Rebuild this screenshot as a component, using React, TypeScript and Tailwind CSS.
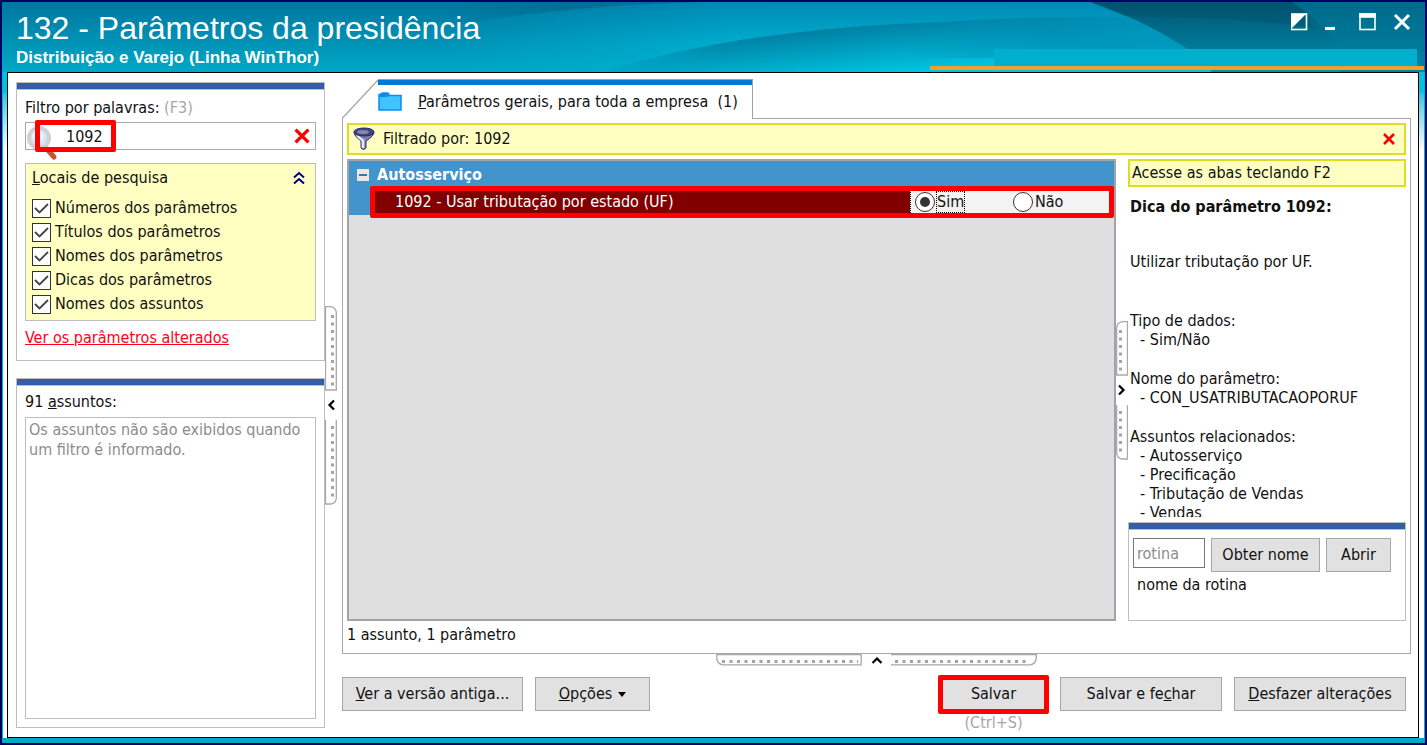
import { useState } from "react";
import type { ReactNode } from "react";

const searchPlaces = [
  "Números dos parâmetros",
  "Títulos dos parâmetros",
  "Nomes dos parâmetros",
  "Dicas dos parâmetros",
  "Nomes dos assuntos",
];

const hintGroups = [
  { title: "Tipo de dados:", items: ["Sim/Não"] },
  { title: "Nome do parâmetro:", items: ["CON_USATRIBUTACAOPORUF"] },
  {
    title: "Assuntos relacionados:",
    items: ["Autosserviço", "Precificação", "Tributação de Vendas", "Vendas"],
  },
];

function Waves() {
  return (
    <svg
      className="absolute inset-0 h-full w-full"
      viewBox="0 0 1423 70"
      preserveAspectRatio="none"
      aria-hidden="true"
    >
      <defs>
        <linearGradient id="base" x1="0" y1="0" x2="0" y2="1">
          <stop offset="0" stopColor="#00769f" />
          <stop offset="1" stopColor="#00a8c6" />
        </linearGradient>
        <linearGradient id="bright" x1="0" y1="0" x2="0" y2="1">
          <stop offset="0" stopColor="#008ab4" />
          <stop offset="0.6" stopColor="#00acce" />
          <stop offset="1" stopColor="#00b0ce" />
        </linearGradient>
        <linearGradient id="mask-fill" x1="0" y1="0" x2="1" y2="0">
          <stop offset="0" stopColor="#fff" stopOpacity="0" />
          <stop offset="0.3" stopColor="#fff" />
        </linearGradient>
        <mask id="reveal">
          <rect x="440" width="983" height="70" fill="url(#mask-fill)" />
        </mask>
        <linearGradient id="top-shade" x1="0" y1="0" x2="1" y2="0">
          <stop offset="0" stopColor="#006488" stopOpacity="0" />
          <stop offset="0.5" stopColor="#006488" stopOpacity="0.5" />
          <stop offset="1" stopColor="#006488" stopOpacity="0.3" />
        </linearGradient>
        <linearGradient id="low" gradientUnits="userSpaceOnUse" x1="900" y1="16" x2="905" y2="70">
          <stop offset="0" stopColor="#007a9f" />
          <stop offset="1" stopColor="#00c4df" />
        </linearGradient>
        <linearGradient id="shade" x1="0" y1="0" x2="1" y2="0">
          <stop offset="0" stopColor="#00a6c6" />
          <stop offset="1" stopColor="#00a6c6" stopOpacity="0" />
        </linearGradient>
        <linearGradient id="low-end" x1="0" y1="0" x2="1" y2="0">
          <stop offset="0" stopColor="#0086ae" stopOpacity="0" />
          <stop offset="0.5" stopColor="#0086ae" stopOpacity="0.6" />
          <stop offset="1" stopColor="#0094bb" stopOpacity="0.9" />
        </linearGradient>
        <linearGradient id="dark" x1="0" y1="0" x2="0" y2="1">
          <stop offset="0" stopColor="#005472" />
          <stop offset="1" stopColor="#0090ae" />
        </linearGradient>
      </defs>
      <rect width="1423" height="70" fill="url(#base)" />
      <path d="M440 0H700C620 3 520 11 440 24Z" fill="url(#top-shade)" />
      <path d="M440 26C520 10 600 3 700 0H1423V70H440Z" fill="url(#bright)" mask="url(#reveal)" />
      <path d="M600 70C700 40 800 25 940 20C1020 15 1100 14 1140 16L1230 70Z" fill="url(#low)" />
      <path d="M600 70C640 57 680 47 720 39V70Z" fill="url(#shade)" />
      <path d="M900 21C1020 15 1100 14 1140 16L1200 56H900Z" fill="url(#low-end)" />
      <path d="M1088 0C1130 14 1160 30 1190 50L1210 70H1423V0Z" fill="url(#dark)" />
      <path d="M1122 14C1190 15 1260 18 1312 26L1290 0H1088Z" fill="#004c69" opacity="0.35" />
      <path d="M1290 0C1312 14 1326 30 1338 50V70H1423V0Z" fill="#007a9c" opacity="0.6" />
    </svg>
  );
}

function WindowButtons() {
  return (
    <div className="flex items-center gap-4 pr-3.5 text-white">
      <button aria-label="Alternar tema">
        <svg width="18" height="18" viewBox="0 0 18 18">
          <rect x="0" y="1" width="15.500" height="15.500" fill="none" stroke="currentColor" strokeWidth="1.600" />
          <path d="M0 1H15L0 16Z" fill="currentColor" />
        </svg>
      </button>
      <button aria-label="Minimizar">
        <svg width="18" height="18" viewBox="0 0 18 18">
          <path d="M0 15.500H10" stroke="currentColor" strokeWidth="3" />
        </svg>
      </button>
      <button aria-label="Maximizar">
        <svg width="18" height="18" viewBox="0 0 18 18">
          <rect x="1" y="1" width="15" height="15.500" fill="none" stroke="currentColor" strokeWidth="1.600" />
          <path d="M.2 2.500H16.800" stroke="currentColor" strokeWidth="4.600" />
        </svg>
      </button>
      <button aria-label="Fechar">
        <svg width="18" height="18" viewBox="0 0 18 18">
          <path d="M2 2L16 16M16 2L2 16" stroke="currentColor" strokeWidth="3" />
        </svg>
      </button>
    </div>
  );
}

function Panel({ className = "", children }: { className?: string; children: ReactNode }) {
  return (
    <section className={`flex flex-col border border-[#bdbdbd] ${className}`}>
      <div className="h-[7px] shrink-0 border-b border-[#bdbdbd] bg-[#315fa8]" />
      {children}
    </section>
  );
}

function PushButton({ className = "", children }: { className?: string; children: ReactNode }) {
  return (
    <button
      className={`h-[34px] shrink-0 border border-[#a6a6a6] bg-[#e1e1e1] whitespace-nowrap hover:bg-[#e5f1fb] ${className}`}
    >
      {children}
    </button>
  );
}

function RedX({ size }: { size: number }) {
  return (
    <svg width={size} height={size} viewBox="0 0 14 14">
      <path d="M2 2L12 12M12 2L2 12" stroke="#f00" strokeWidth="2.600" />
    </svg>
  );
}

function Chevron({ d }: { d: string }) {
  return (
    <svg width="12" height="12" viewBox="0 0 12 12">
      <path d={d} fill="none" stroke="#000" strokeWidth="2.200" />
    </svg>
  );
}

// Grip of a vertical splitter; flip mirrors the rounded side to the left.
function VerticalGrip({ size, flip = false }: { size: number; flip?: boolean }) {
  return (
    <button
      className={`flex flex-col items-center ${flip ? "-scale-x-100" : ""}`}
      aria-label="Recolher painel"
    >
      <svg width="12" height={size} aria-hidden="true">
        <path d={`M.5 .7H6Q11.300 2 11.300 7V${size - 1}H.5Z`} fill="#fff" stroke="#a8a8a8" strokeWidth="1.300" />
        <path d={`M7.500 9V${size - 4}`} stroke="#a3a3a3" strokeWidth="3" strokeDasharray="3 4.500" />
      </svg>
      <span className="flex h-[29px] items-center">
        <Chevron d="M9 1.500L4.500 6L9 10.500" />
      </span>
      <svg width="12" height={size} aria-hidden="true">
        <path d={`M11.300 0V${size - 7}Q11.300 ${size - 2} 6 ${size - 1}H.5V0`} fill="#fff" stroke="#a8a8a8" strokeWidth="1.300" />
        <path d={`M7.500 6V${size - 7}`} stroke="#a3a3a3" strokeWidth="3" strokeDasharray="3 4.500" />
      </svg>
    </button>
  );
}

function HorizontalGrip() {
  return (
    <button className="mx-auto flex items-center" aria-label="Recolher rodapé">
      <svg width="146" height="12" aria-hidden="true">
        <path d="M.8 .5V5Q2 10.500 7 10.800H145.200V.5Z" fill="#fff" stroke="#a8a8a8" strokeWidth="1.300" />
        <path d="M6 7.500H142" stroke="#a3a3a3" strokeWidth="3" strokeDasharray="3 4.500" />
      </svg>
      <span className="flex w-[29px] justify-center">
        <Chevron d="M1.500 9L6 4.500L10.500 9" />
      </span>
      <svg width="146" height="12" aria-hidden="true">
        <path d="M0 10.800H139Q144 10.500 145.200 5V.5H0" fill="#fff" stroke="#a8a8a8" strokeWidth="1.300" />
        <path d="M4 7.500H138" stroke="#a3a3a3" strokeWidth="3" strokeDasharray="3 4.500" />
      </svg>
    </button>
  );
}

function Magnifier() {
  return (
    <svg className="absolute top-0 left-0" width="32" height="38" viewBox="0 0 32 38">
      <path d="M21 26L28 34" stroke="#c4572f" strokeWidth="5" strokeLinecap="round" />
      <circle cx="13" cy="15" r="10" fill="#d5e6f6" stroke="#cfd1d4" strokeWidth="4" />
      <circle cx="12" cy="13" r="6" fill="#e8f3fd" />
    </svg>
  );
}

function Funnel() {
  return (
    <svg width="22" height="24" viewBox="0 0 22 24">
      <path d="M1 5Q1 9 8 14V21Q10.500 24 13 21V14Q21 9 21 5Z" fill="#7f7fae" stroke="#33336e" />
      <path d="M4 8Q7 12 10 13.500V21" fill="none" stroke="#e9e9f6" strokeWidth="2.500" />
      <ellipse cx="11" cy="5" rx="10" ry="4" fill="#43437f" stroke="#26265c" />
      <ellipse cx="10" cy="5" rx="6" ry="2" fill="#8585b5" />
    </svg>
  );
}

function SearchPanel() {
  const [query, setQuery] = useState("1092");

  return (
    <Panel>
      <div className="px-2 pt-2 pb-3">
        <label htmlFor="filter" className="block leading-5">
          Filtro por palavras: <span className="text-[#a6a6a6]">(F3)</span>
        </label>
        <div className="relative mt-1 flex h-7 items-center border border-[#a9a9a9] pr-1">
          <Magnifier />
          <input
            id="filter"
            className="h-full min-w-0 flex-1 bg-transparent pl-10 outline-none"
            value={query}
            onChange={(e) => setQuery(e.target.value)}
          />
          <button aria-label="Limpar filtro" onClick={() => setQuery("")}>
            <RedX size={18} />
          </button>
          <div className="pointer-events-none absolute -top-[3px] left-[9px] h-8 w-[81px] rounded-xs border-5 border-[#f00]" />
        </div>
        <fieldset className="mt-[13px] border border-[#bdbdbd] bg-[#ffffc1] px-1.5 py-1">
          <div className="mb-2 flex items-center justify-between pr-1 leading-5">
            <span>
              <u>L</u>ocais de pesquisa
            </span>
            <button aria-label="Recolher locais">
              <svg width="12" height="14" viewBox="0 0 12 14">
                <path d="M1 6.500L6 2L11 6.500M1 12.500L6 8L11 12.500" fill="none" stroke="#00007c" strokeWidth="2" />
              </svg>
            </button>
          </div>
          {searchPlaces.map((place) => (
            <label key={place} className="flex h-6 items-center gap-1">
              <span className="relative flex">
                <input
                  type="checkbox"
                  defaultChecked
                  className="peer h-[19px] w-[19px] appearance-none border border-[#333] bg-white"
                />
                <svg className="pointer-events-none absolute inset-0 hidden peer-checked:block" width="19" height="19" viewBox="0 0 19 19">
                  <path d="M3 9L7.500 13.500L16 5" fill="none" stroke="#444" strokeWidth="1.800" />
                </svg>
              </span>
              {place}
            </label>
          ))}
        </fieldset>
        <a href="#alterados" className="mt-[7px] block leading-5 text-[#ff0018] underline">
          Ver os parâmetros alterados
        </a>
      </div>
    </Panel>
  );
}

function Radio({ defaultChecked = false }: { defaultChecked?: boolean }) {
  return (
    <span className="relative flex">
      <input
        type="radio"
        name="param1092"
        defaultChecked={defaultChecked}
        className="peer h-5 w-5 appearance-none rounded-full border border-[#333] bg-white"
      />
      <span className="pointer-events-none absolute top-[5px] left-[5px] hidden h-2.5 w-2.5 rounded-full bg-[#333] peer-checked:block" />
    </span>
  );
}

function ParameterTree() {
  return (
    <div className="flex min-w-0 flex-1 flex-col border-2 border-[#a0a3a8] bg-[#dfdfdf]">
      <div className="flex h-7 items-center gap-2 bg-[#4393cd] pl-2 font-bold text-white">
        <button aria-label="Recolher Autosserviço" className="flex h-3 w-3 items-center justify-center bg-[#e8e8e8]">
          <span className="h-0.5 w-2 bg-[#4a6ea8]" />
        </button>
        Autosserviço
      </div>
      <div className="relative flex h-[26px] bg-[#4393cd] pr-1 pl-[26px]">
        <div className="flex flex-1 items-center bg-[#800000] pl-5 text-white">
          1092 - Usar tributação por estado (UF)
        </div>
        <div className="flex w-[200px] items-center border-l border-dotted border-black bg-[#f3f3f3] pl-1">
          <label className="flex w-[98px] items-center gap-0.5">
            <Radio defaultChecked />
            <span className="leading-5 outline-1 outline-dotted outline-black">Sim</span>
          </label>
          <label className="flex items-center gap-0.5">
            <Radio />
            Não
          </label>
        </div>
        <div className="pointer-events-none absolute -top-[3px] right-0 -bottom-[3px] left-[21px] rounded-xs border-5 border-[#f00]" />
      </div>
    </div>
  );
}

function HintColumn() {
  return (
    <aside className="flex w-[278px] shrink-0 flex-col">
      <div className="h-7 shrink-0 border-2 border-[#dddd22] bg-[#ffffc1] px-0.5 leading-6 whitespace-nowrap">
        Acesse as abas teclando F2
      </div>
      <div className="min-h-0 flex-1 basis-0 overflow-hidden px-0.5 pt-2.5 leading-[19px]">
        <h2 className="font-bold">Dica do parâmetro 1092:</h2>
        <p className="mt-9">Utilizar tributação por UF.</p>
        <div className="mt-10 flex flex-col gap-5">
          {hintGroups.map((group) => (
            <div key={group.title}>
              <h3>{group.title}</h3>
              <ul className="pl-2.5">
                {group.items.map((item) => (
                  <li key={item}>- {item}</li>
                ))}
              </ul>
            </div>
          ))}
        </div>
      </div>
      <Panel className="mt-[5px] h-[99px] shrink-0">
        <div className="flex items-start gap-1.5 px-1 pt-2">
          <input
            aria-label="rotina"
            placeholder="rotina"
            className="h-[30px] w-[72px] border border-[#777] px-[3px] placeholder:text-[#8c8c8c]"
          />
          <PushButton className="w-[109px]">Obter nome</PushButton>
          <PushButton className="w-[65px]">Abrir</PushButton>
        </div>
        <p className="px-2 pt-[3px] leading-5">nome da rotina</p>
      </Panel>
    </aside>
  );
}

function MainArea() {
  return (
    <div className="flex min-w-0 flex-1 flex-col">
      <div className="z-10 -mb-px flex h-10" role="tablist">
        <button role="tab" aria-selected="true" className="flex">
          <svg width="36" height="40" viewBox="0 0 36 40">
            <path d="M.5 40V39L36 1V40Z" fill="#fff" />
            <path d="M.5 40V39L36 1" fill="none" stroke="#a8a8a8" strokeWidth="1.300" />
          </svg>
          <span className="flex h-full items-center border-t border-r border-[#a0a0a0] bg-white">
            <span className="flex h-full w-full items-center gap-4 border-t-5 border-[#0078d7] pr-3.5">
              <svg width="24" height="20" viewBox="0 0 24 20">
                <path d="M1 18V2.500H3Q3 1 5 1H9Q11 1 11 3.500H23V18Z" fill="#40c4ff" stroke="#0a8cf5" strokeWidth="1.500" />
                <path d="M2 2.500Q3 1 5 1H9Q11 1 11 3.500Q10 5 8 5H2Z" fill="#0a8cf5" />
              </svg>
              <span className="whitespace-pre">
                <u>P</u>arâmetros gerais, para toda a empresa{"  "}(1)
              </span>
            </span>
          </span>
        </button>
      </div>
      <div className="flex min-h-0 flex-1 flex-col border border-[#a8a8a8] px-1 pt-1">
        <div className="flex h-8 shrink-0 items-center border-2 border-[#dddd22] bg-[#ffffc1] pr-2 pl-1">
          <Funnel />
          <span className="flex-1 pl-2">Filtrado por: 1092</span>
          <button aria-label="Remover filtro">
            <RedX size={14} />
          </button>
        </div>
        <div className="mt-1 flex min-h-0 flex-1">
          <ParameterTree />
          <div className="flex w-3 shrink-0 items-center">
            <VerticalGrip size={55} flip />
          </div>
          <HintColumn />
        </div>
        <p className="h-8 shrink-0 pt-1 leading-5">1 assunto, 1 parâmetro</p>
      </div>
      <HorizontalGrip />
      <div className="mt-[11px] flex h-[60px] shrink-0 items-start pr-[5px]">
        <PushButton className="w-[181px]">
          <u>V</u>er a versão antiga...
        </PushButton>
        <PushButton className="ml-3 w-[115px]">
          <span className="flex items-center justify-center gap-1.5">
            <span>
              <u>O</u>pções
            </span>
            <svg width="8" height="5" viewBox="0 0 8 5">
              <path d="M0 0H8L4 5Z" />
            </svg>
          </span>
        </PushButton>
        <div className="ml-auto flex gap-3">
          <div className="relative w-[109px] text-center">
            <PushButton className="w-full">Salvar</PushButton>
            <div className="leading-6 text-[#a6a6a6]">(Ctrl+S)</div>
            <div className="pointer-events-none absolute -inset-x-px -top-0.5 h-[39px] rounded-xs border-5 border-[#f00]" />
          </div>
          <PushButton className="w-[162px]">
            Salvar e fe<u>c</u>har
          </PushButton>
          <PushButton className="w-[172px]">
            <u>D</u>esfazer alterações
          </PushButton>
        </div>
      </div>
    </div>
  );
}

export default function App() {
  return (
    <div className="flex h-screen min-h-[600px] flex-col border-2 border-[#00005f] bg-[#00a9c4] font-['DejaVu_Sans_Condensed','DejaVu_Sans',sans-serif] text-base text-[#111]">
      <header className="relative flex h-[70px] shrink-0 items-start justify-between">
        <Waves />
        <div className="relative pt-2 pl-3.5 font-['Liberation_Sans',Arial,sans-serif] text-white">
          <h1 className="text-[32px] leading-9">132 - Parâmetros da presidência</h1>
          <p className="text-[17px] leading-6 font-bold">Distribuição e Varejo (Linha WinThor)</p>
        </div>
        <div className="relative pt-[11px]">
          <WindowButtons />
        </div>
        <div className="absolute right-2 bottom-1 h-[19px] w-[423px] bg-[#00aece]" />
        <div className="absolute right-px bottom-0.5 h-1 w-[494px] bg-[#f0a02c]" />
      </header>
      <div className="flex min-h-0 flex-1 border-x border-[#00b4cc] bg-linear-to-b from-[#00c4df] from-3% via-white via-12% to-white to-88% pr-[5px] pl-1">
        <main className="flex min-w-0 flex-1 border border-black bg-white pr-[7px] pl-2">
          <div className="flex w-[309px] shrink-0 flex-col gap-[17px] py-[9px]">
            <SearchPanel />
            <Panel className="min-h-0 flex-1">
              <div className="flex min-h-0 flex-1 flex-col px-2 pt-1.5 pb-2">
                <span className="leading-5">
                  91 <u>a</u>ssuntos:
                </span>
                <div className="mt-[5px] flex-1 border border-[#bdbdbd] px-[3px] pt-0.5 leading-5 text-[#8c8c8c]">
                  Os assuntos não são exibidos quando um filtro é informado.
                </div>
              </div>
            </Panel>
          </div>
          <div className="flex w-[17px] shrink-0 items-center">
            <VerticalGrip size={85} />
          </div>
          <div className="flex min-w-0 flex-1 pt-1.5">
            <MainArea />
          </div>
        </main>
      </div>
      <div className="h-[5px] shrink-0 bg-[#00a9c4]" />
    </div>
  );
}
